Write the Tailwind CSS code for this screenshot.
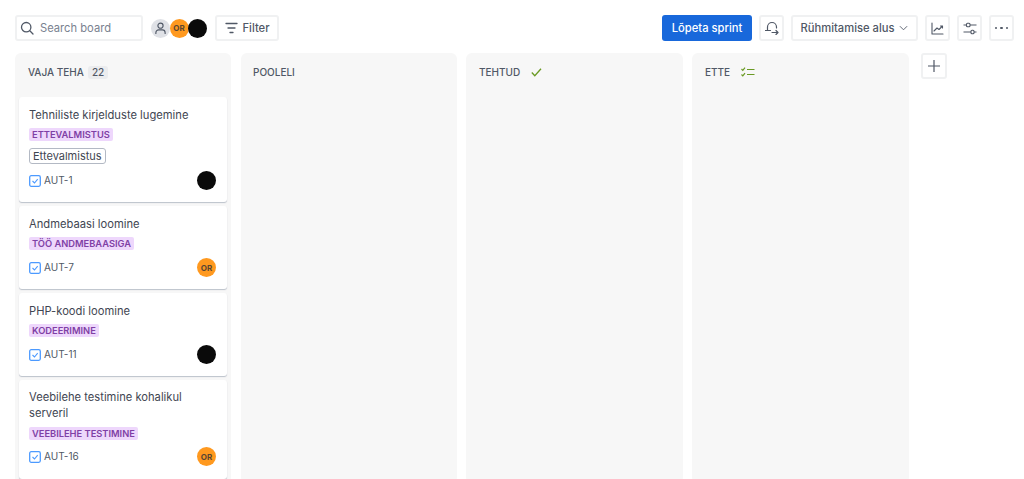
<!DOCTYPE html>
<html lang="en">
  <head>
    <meta charset="UTF-8" />
    <title>Board</title>
    <script src="https://cdn.jsdelivr.net/npm/@tailwindcss/browser@4"></script>
  </head>
  <body class="bg-white font-['Inter',sans-serif] text-[#505866] h-[479px] overflow-hidden">
    <!-- Toolbar -->
    <div class="flex items-center justify-between h-[53px] pl-[15px] pr-[10px] pt-[3px]">
      <div class="flex items-center">
        <div class="flex items-center w-[128px] h-[26px] border-2 border-[#f0f1f2] rounded-[3px] pl-[3px] gap-[6px] text-[11.200px] text-[#7a8290]">
          <svg class="w-[14px] h-[14px] text-[#505866]" viewBox="0 0 14 14" fill="none" stroke="currentColor" stroke-width="1.300" stroke-linecap="round"><circle cx="6.200" cy="6.200" r="4.700"/><path d="M9.800 9.800L13 13"/></svg>
          Search board
        </div>
        <div class="flex items-center ml-[8px]">
          <div class="w-[19px] h-[19px] rounded-full bg-[#dfe1e6] flex items-center justify-center">
            <svg class="w-[13px] h-[13px]" viewBox="0 0 14 14" fill="none" stroke="#505866" stroke-width="1.200"><circle cx="7" cy="4" r="2.800"/><path d="M2 13v-1.500c0-2 1.500-3 3-3h4c1.500 0 3 1 3 3V13"/></svg>
          </div>
          <div class="w-[19px] h-[19px] -ml-[0.500px] rounded-full bg-[#ff991f] flex items-center justify-center text-[8px] font-bold text-[#5a4632]">OR</div>
          <div class="w-[19px] h-[19px] -ml-[0.500px] rounded-full bg-[#0a0a0a]"></div>
        </div>
        <div class="flex items-center justify-center w-[64px] h-[26px] ml-[8px] border-2 border-[#f0f1f2] rounded-[3px] gap-[5px] text-[11.200px] font-medium">
          <svg class="w-[13px] h-[12px]" viewBox="0 0 13 12" fill="none" stroke="currentColor" stroke-width="1.300" stroke-linecap="round"><path d="M1 1.500h11M3 6h7M5 10.500h3"/></svg>
          Filter
        </div>
      </div>
      <div class="flex items-center gap-[7px]">
        <div class="flex items-center justify-center w-[90px] h-[26px] bg-[#1868db] rounded-[3px] text-white text-[11.200px] font-medium">Lõpeta sprint</div>
        <div class="flex items-center justify-center w-[25px] h-[26px] border-2 border-[#f0f1f2] rounded-[3px]">
          <svg class="w-[14px] h-[14px]" viewBox="0 0 14 14" fill="none" stroke="currentColor" stroke-width="1.200" stroke-linecap="round" stroke-linejoin="round"><path d="M2.500 9.500V6a4.500 4.500 0 0 1 9 0v1M0.500 9.500h5M7 11.500h6M11 9.500l2 2-2 2"/></svg>
        </div>
        <div class="flex items-center justify-center w-[127px] h-[26px] border-2 border-[#f0f1f2] rounded-[3px] gap-[5px] text-[11.200px] font-medium">
          Rühmitamise alus
          <svg class="w-[9px] h-[6px]" viewBox="0 0 10 6" fill="none" stroke="currentColor" stroke-width="1"><path d="M1 1l4 4 4-4"/></svg>
        </div>
        <div class="flex items-center justify-center w-[25px] h-[26px] border-2 border-[#f0f1f2] rounded-[3px]">
          <svg class="w-[13px] h-[13px]" viewBox="0 0 13 13" fill="none" stroke="currentColor" stroke-width="1.100" stroke-linecap="round" stroke-linejoin="round"><path d="M1 1v11h11M3 9l3-3 2 1.500L11.500 4M9.500 4h2v2"/></svg>
        </div>
        <div class="flex items-center justify-center w-[25px] h-[26px] border-2 border-[#f0f1f2] rounded-[3px]">
          <svg class="w-[14px] h-[13px]" viewBox="0 0 14 13" fill="none" stroke="currentColor" stroke-width="1.100"><path d="M0.500 3h3M7 3h6.500M0.500 10h7.500M11 10h2.500"/><rect x="3.500" y="1.200" width="3.500" height="3.600" rx="1"/><rect x="8" y="8.200" width="3" height="3.600" rx="1"/></svg>
        </div>
        <div class="flex items-center justify-center gap-[3px] w-[25px] h-[26px] border-2 border-[#f0f1f2] rounded-[3px]">
          <span class="w-[2.500px] h-[2.500px] rounded-full bg-[#505866]"></span>
          <span class="w-[2.500px] h-[2.500px] rounded-full bg-[#505866]"></span>
          <span class="w-[2.500px] h-[2.500px] rounded-full bg-[#505866]"></span>
        </div>
      </div>
    </div>

    <!-- Columns -->
    <div class="flex items-start pl-[15px]">
      <div class="w-[216px] h-[430px] bg-[#f7f7f7] rounded-[6px] px-[4px] mr-[10px]">
        <div class="flex items-center h-[38px] mb-[6px] pl-[9px] gap-[4px] text-[10px] font-medium">
          VAJA TEHA
          <span class="px-[4px] h-[13px] leading-[13px] rounded-[3px] bg-[#ebecee] text-[10px]">22</span>
        </div>
        <div class="flex flex-col gap-[4px]">
          <!-- card -->
          <div class="bg-white rounded-[3px] shadow-[0_1px_1px_rgba(9,30,66,0.25)] h-[105px] pl-[10px] pr-[11px] pt-[10px]">
            <div class="text-[11.200px] leading-[16px] text-[#3f4652]">Tehniliste kirjelduste lugemine</div>
            <div class="mt-[5px] flex"><span class="h-[13px] leading-[13px] px-[3px] rounded-[2px] bg-[#eed7fc] text-[#803fa5] text-[9.300px] font-semibold">ETTEVALMISTUS</span></div>
            <div class="mt-[7px] flex"><span class="h-[16px] leading-[14px] px-[3px] rounded-[3px] border border-[#b3b9c4] text-[#3f4652] text-[11px]">Ettevalmistus</span></div>
            <div class="flex items-center justify-between mt-[7px]">
              <div class="flex items-center gap-[3px] text-[10px]">
                <svg class="w-[12px] h-[12px]" viewBox="0 0 12 12" fill="none"><rect x="0.700" y="0.700" width="10.600" height="10.600" rx="1.500" stroke="#4c9aff" stroke-width="1.300"/><path d="M3.500 6l2 2 3.200-3.800" stroke="#4c9aff" stroke-width="1.100"/></svg>
                AUT-1
              </div>
              <div class="w-[19px] h-[19px] rounded-full bg-[#0a0a0a]"></div>
            </div>
          </div>
          <div class="bg-white rounded-[3px] shadow-[0_1px_1px_rgba(9,30,66,0.25)] h-[83px] pl-[10px] pr-[11px] pt-[10px]">
            <div class="text-[11.200px] leading-[16px] text-[#3f4652]">Andmebaasi loomine</div>
            <div class="mt-[5px] flex"><span class="h-[13px] leading-[13px] px-[3px] rounded-[2px] bg-[#eed7fc] text-[#803fa5] text-[9.300px] font-semibold">TÖÖ ANDMEBAASIGA</span></div>
            <div class="flex items-center justify-between mt-[8px]">
              <div class="flex items-center gap-[3px] text-[10px]">
                <svg class="w-[12px] h-[12px]" viewBox="0 0 12 12" fill="none"><rect x="0.700" y="0.700" width="10.600" height="10.600" rx="1.500" stroke="#4c9aff" stroke-width="1.300"/><path d="M3.500 6l2 2 3.200-3.800" stroke="#4c9aff" stroke-width="1.100"/></svg>
                AUT-7
              </div>
              <div class="w-[19px] h-[19px] rounded-full bg-[#ff991f] flex items-center justify-center text-[8px] font-bold text-[#5a4632]">OR</div>
            </div>
          </div>
          <div class="bg-white rounded-[3px] shadow-[0_1px_1px_rgba(9,30,66,0.25)] h-[83px] pl-[10px] pr-[11px] pt-[10px]">
            <div class="text-[11.200px] leading-[16px] text-[#3f4652]">PHP-koodi loomine</div>
            <div class="mt-[5px] flex"><span class="h-[13px] leading-[13px] px-[3px] rounded-[2px] bg-[#eed7fc] text-[#803fa5] text-[9.300px] font-semibold">KODEERIMINE</span></div>
            <div class="flex items-center justify-between mt-[8px]">
              <div class="flex items-center gap-[3px] text-[10px]">
                <svg class="w-[12px] h-[12px]" viewBox="0 0 12 12" fill="none"><rect x="0.700" y="0.700" width="10.600" height="10.600" rx="1.500" stroke="#4c9aff" stroke-width="1.300"/><path d="M3.500 6l2 2 3.200-3.800" stroke="#4c9aff" stroke-width="1.100"/></svg>
                AUT-11
              </div>
              <div class="w-[19px] h-[19px] rounded-full bg-[#0a0a0a]"></div>
            </div>
          </div>
          <div class="bg-white rounded-[3px] shadow-[0_1px_1px_rgba(9,30,66,0.25)] h-[99px] pl-[10px] pr-[11px] pt-[9px]">
            <div class="text-[11.200px] leading-[16px] text-[#3f4652]">Veebilehe testimine kohalikul serveril</div>
            <div class="mt-[6px] flex"><span class="h-[13px] leading-[13px] px-[3px] rounded-[2px] bg-[#eed7fc] text-[#803fa5] text-[9.300px] font-semibold">VEEBILEHE TESTIMINE</span></div>
            <div class="flex items-center justify-between mt-[7px]">
              <div class="flex items-center gap-[3px] text-[10px]">
                <svg class="w-[12px] h-[12px]" viewBox="0 0 12 12" fill="none"><rect x="0.700" y="0.700" width="10.600" height="10.600" rx="1.500" stroke="#4c9aff" stroke-width="1.300"/><path d="M3.500 6l2 2 3.200-3.800" stroke="#4c9aff" stroke-width="1.100"/></svg>
                AUT-16
              </div>
              <div class="w-[19px] h-[19px] rounded-full bg-[#ff991f] flex items-center justify-center text-[8px] font-bold text-[#5a4632]">OR</div>
            </div>
          </div>
        </div>
      </div>
      <div class="w-[216px] h-[430px] bg-[#f7f7f7] rounded-[6px] mr-[9px]">
        <div class="flex items-center h-[38px] pl-[12px] text-[10px] font-medium">POOLELI</div>
      </div>
      <div class="w-[217px] h-[430px] bg-[#f7f7f7] rounded-[6px] mr-[9px]">
        <div class="flex items-center h-[38px] pl-[13px] gap-[11px] text-[10px] font-medium">
          TEHTUD
          <svg class="w-[11px] h-[9px]" viewBox="0 0 11 9" fill="none" stroke="#6a9a23" stroke-width="1.300"><path d="M0.800 4.500l3 3.300 6.200-7"/></svg>
        </div>
      </div>
      <div class="w-[217px] h-[430px] bg-[#f7f7f7] rounded-[6px] mr-[12px]">
        <div class="flex items-center h-[38px] pl-[13px] gap-[11px] text-[10px] font-medium">
          ETTE
          <svg class="w-[14px] h-[10px]" viewBox="0 0 14 10" fill="none" stroke="#6a9a23" stroke-width="1.200"><path d="M0.500 2l1.300 1.300L4 0.700M0.500 7.500l1.300 1.300L4 6.200M6 2.500h7.500M6 7.500h7.500"/></svg>
        </div>
      </div>
      <div class="flex items-center justify-center w-[26px] h-[26px] border-2 border-[#f0f1f2] rounded-[3px]">
        <svg class="w-[12px] h-[12px]" viewBox="0 0 12 12" fill="none" stroke="#505866" stroke-width="1.200"><path d="M6 0v12M0 6h12"/></svg>
      </div>
    </div>
  </body>
</html>
